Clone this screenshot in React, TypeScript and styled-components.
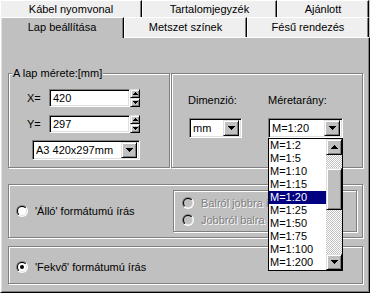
import React, { useId } from 'react';
import styled, { createGlobalStyle, css } from 'styled-components';

const GlobalStyle = createGlobalStyle`
  html, body { margin: 0; padding: 0; background: #c0c0c0; }
  body { font-family: "Liberation Sans", Arial, sans-serif; font-size: 11px; color: #000; }
  * { box-sizing: border-box; }
`;

const raised = css`
  border: 1px solid;
  border-color: #dfdfdf #000 #000 #dfdfdf;
  box-shadow: inset 1px 1px #fff, inset -1px -1px #808080;
  background: #c0c0c0;
`;

const sunken = css`
  border: 1px solid;
  border-color: #808080 #fff #fff #808080;
  box-shadow: inset 1px 1px #000, inset -1px -1px #dfdfdf;
  background: #fff;
`;

const Window = styled.div`
  width: 370px;
  height: 293px;
  display: flex;
  flex-direction: column;
  background: #c0c0c0;
  overflow: hidden;
`;

const TabRow = styled.div<{ $h: number }>`
  display: flex;
  align-items: flex-end;
  height: ${p => p.$h}px;
  flex: none;
  position: relative;
  z-index: 2;
`;

const Tab = styled.div<{ $w: number; $active?: boolean; $pb?: number }>`
  width: ${p => p.$w}px;
  height: 100%;
  flex: none;
  display: flex;
  align-items: center;
  justify-content: center;
  padding-bottom: ${p => p.$pb ?? 0}px;
  white-space: nowrap;
  background: #efefef;
  border-top: 1px solid #fff;
  border-left: 1px solid #fff;
  border-right: 1px solid #000;
  box-shadow: inset -1px 0 #808080;
  ${p =>
    p.$active &&
    css`
      background: #c0c0c0;
      height: calc(100% + 1px);
      margin-bottom: -1px;
      box-shadow: inset -1px 0 #808080, inset 1px 0 #dfdfdf;
    `}
`;

const Panel = styled.div`
  flex: 1;
  display: flex;
  flex-direction: column;
  padding: 35px 6px 0 7px;
  border-top: 1px solid #fff;
  border-left: 1px solid #fff;
  border-right: 1px solid #000;
  border-bottom: 1px solid #000;
  box-shadow: inset 1px 0 #dfdfdf, inset -1px -1px #808080;
`;

const TopSection = styled.div`
  display: flex;
  gap: 1px;
  flex: none;
`;

const Group = styled.div<{ $w?: number; $h: number; $mt?: number }>`
  position: relative;
  flex: none;
  width: ${p => (p.$w ? `${p.$w}px` : 'auto')};
  height: ${p => p.$h}px;
  margin-top: ${p => p.$mt ?? 0}px;
  border: 1px solid #808080;
  box-shadow: inset 1px 1px #fff, 1px 1px #fff;
`;

const Legend = styled.span`
  position: absolute;
  top: -7px;
  left: 3px;
  padding: 0 1px;
  line-height: 13px;
  background: #c0c0c0;
  white-space: nowrap;
`;

const SizeGroup = styled(Group)`
  display: flex;
  flex-direction: column;
  padding: 15px 0 0 18px;
`;

const FieldRow = styled.div<{ $mt?: number }>`
  display: flex;
  align-items: center;
  height: 18px;
  margin-top: ${p => p.$mt ?? 0}px;
`;

const FieldLabel = styled.span`
  width: 22px;
  flex: none;
`;

const TextInput = styled.div<{ $w: number }>`
  ${sunken};
  width: ${p => p.$w}px;
  height: 18px;
  padding: 0 0 0 3px;
  display: flex;
  align-items: center;
`;

const Spin = styled.div`
  display: flex;
  flex-direction: column;
  width: 10px;
  height: 18px;
`;

const SpinButton = styled.div`
  ${raised};
  height: 9px;
  display: flex;
  align-items: center;
  justify-content: center;
`;

const Combo = styled.div<{ $w: number; $ml?: number; $mt?: number }>`
  ${sunken};
  width: ${p => p.$w}px;
  height: 20px;
  margin-left: ${p => p.$ml ?? 0}px;
  margin-top: ${p => p.$mt ?? 0}px;
  padding: 2px 2px 2px 3px;
  display: flex;
  align-items: center;
  justify-content: space-between;
  flex: none;
`;

const ComboButton = styled.div`
  ${raised};
  width: 16px;
  height: 16px;
  display: flex;
  align-items: center;
  justify-content: center;
  flex: none;
`;

const ScaleGroup = styled(Group)`
  display: grid;
  grid-template-columns: 80px 75px;
  grid-template-rows: 13px 20px;
  row-gap: 11px;
  padding: 20px 0 0 16px;
  align-content: start;
`;

const Caption = styled.span`
  line-height: 13px;
  white-space: nowrap;
`;

const ComboWrap = styled.div`
  position: relative;
`;

const DropList = styled.div`
  position: absolute;
  z-index: 10;
  top: 20px;
  left: 0;
  width: 75px;
  height: 133px;
  border: 1px solid #000;
  background: #fff;
  display: flex;
`;

const Items = styled.div`
  flex: 1;
  display: flex;
  flex-direction: column;
`;

const Item = styled.div<{ $sel?: boolean }>`
  height: 13px;
  line-height: 13px;
  padding-left: 1px;
  white-space: nowrap;
  background: ${p => (p.$sel ? '#000080' : 'transparent')};
  color: ${p => (p.$sel ? '#fff' : '#000')};
`;

const ScrollBar = styled.div`
  width: 16px;
  flex: none;
  display: flex;
  flex-direction: column;
`;

const ScrollButton = styled.div`
  ${raised};
  width: 16px;
  height: 16px;
  flex: none;
  display: flex;
  align-items: center;
  justify-content: center;
`;

const Track = styled.div<{ $h?: number }>`
  flex: ${p => (p.$h ? 'none' : '1')};
  height: ${p => (p.$h ? `${p.$h}px` : 'auto')};
  background: repeating-conic-gradient(#fff 0 25%, #c0c0c0 0 50%) 0 0 / 2px 2px;
`;

const Thumb = styled.div`
  ${raised};
  height: 42px;
  flex: none;
`;

const OrientGroup = styled(Group)<{ $pt?: number }>`
  display: flex;
  align-items: center;
  padding: ${p => p.$pt ?? 0}px 5px 0 7px;
`;

const RadioRow = styled.div<{ $h?: number }>`
  display: flex;
  align-items: center;
  gap: 7px;
  height: ${p => (p.$h ? `${p.$h}px` : 'auto')};
  white-space: nowrap;
`;

const RadioLabel = styled.span<{ $disabled?: boolean }>`
  color: ${p => (p.$disabled ? '#808080' : '#000')};
  text-shadow: ${p => (p.$disabled ? '1px 1px 0 #fff' : 'none')};
`;

/* the open drop-down list covers the right part of these labels */
const CoveredLabel = styled(RadioLabel)`
  display: block;
  max-width: 69px;
  overflow: hidden;
  white-space: nowrap;
  line-height: 14px;
`;

const InnerFrame = styled.div`
  width: 184px;
  height: 42px;
  margin-left: auto;
  margin-bottom: 1px;
  padding: 4px 0 0 8px;
  border: 1px solid #808080;
  box-shadow: inset 1px 1px #fff, 1px 1px #fff;
  overflow: hidden;
  display: flex;
  flex-direction: column;
`;

const RadioSvg = styled.svg`
  flex: none;
  display: block;
`;

const Arrow = ({ dir, w = 7 }: { dir: 'up' | 'down'; w?: number }) => {
  const h = Math.ceil(w / 2);
  const rects = [];
  for (let i = 0; i < h; i++) {
    const y = dir === 'down' ? i : h - 1 - i;
    rects.push(<rect key={i} x={i} y={y} width={w - 2 * i} height={1} />);
  }
  return (
    <svg width={w} height={h} viewBox={`0 0 ${w} ${h}`} shapeRendering="crispEdges" fill="#000" style={{ display: 'block' }}>
      {rects}
    </svg>
  );
};

const Radio = ({ checked, disabled }: { checked?: boolean; disabled?: boolean }) => {
  const id = useId().replace(/[^a-zA-Z0-9]/g, '');
  return (
    <RadioSvg width="12" height="12" viewBox="0 0 12 12">
      <defs>
        <linearGradient id={`o${id}`} x1="0" y1="0" x2="1" y2="1">
          <stop offset="0.5" stopColor="#808080" />
          <stop offset="0.5" stopColor="#ffffff" />
        </linearGradient>
        <linearGradient id={`i${id}`} x1="0" y1="0" x2="1" y2="1">
          <stop offset="0.5" stopColor="#000000" />
          <stop offset="0.5" stopColor="#dfdfdf" />
        </linearGradient>
      </defs>
      <circle cx="6" cy="6" r="6" fill={`url(#o${id})`} />
      <circle cx="6" cy="6" r="5" fill={`url(#i${id})`} />
      <circle cx="6" cy="6" r="4" fill={disabled ? '#c0c0c0' : '#ffffff'} />
      {checked && <circle cx="6" cy="6" r="2" fill="#000" />}
    </RadioSvg>
  );
};

const ComboBox = ({ value, w, ml, mt }: { value: string; w: number; ml?: number; mt?: number }) => (
  <Combo $w={w} $ml={ml} $mt={mt}>
    <span>{value}</span>
    <ComboButton>
      <Arrow dir="down" />
    </ComboButton>
  </Combo>
);

const SpinField = ({ label, value, mt }: { label: string; value: string; mt?: number }) => (
  <FieldRow $mt={mt}>
    <FieldLabel>{label}</FieldLabel>
    <TextInput $w={81}>{value}</TextInput>
    <Spin>
      <SpinButton>
        <Arrow dir="up" w={5} />
      </SpinButton>
      <SpinButton>
        <Arrow dir="down" w={5} />
      </SpinButton>
    </Spin>
  </FieldRow>
);

const scales = ['M=1:2', 'M=1:5', 'M=1:10', 'M=1:15', 'M=1:20', 'M=1:25', 'M=1:50', 'M=1:75', 'M=1:100', 'M=1:200'];

export default function App() {
  return (
    <>
      <GlobalStyle />
      <Window>
        <TabRow $h={17}>
          <Tab $w={142}>Kábel nyomvonal</Tab>
          <Tab $w={135}>Tartalomjegyzék</Tab>
          <Tab $w={92}>Ajánlott</Tab>
        </TabRow>
        <TabRow $h={20}>
          <Tab $w={124} $active $pb={2}>Lap beállítása</Tab>
          <Tab $w={123} $pb={2}>Metszet színek</Tab>
          <Tab $w={122} $pb={2}>Fésű rendezés</Tab>
        </TabRow>
        <Panel>
          <TopSection>
            <SizeGroup $w={162} $h={95}>
              <Legend>A lap mérete:[mm]</Legend>
              <SpinField label="X=" value="420" />
              <SpinField label="Y=" value="297" mt={8} />
              <ComboBox value="A3 420x297mm" w={108} ml={5} mt={7} />
            </SizeGroup>
            <ScaleGroup $w={192} $h={95}>
              <Caption>Dimenzió:</Caption>
              <Caption>Méretarány:</Caption>
              <ComboBox value="mm" w={53} ml={1} />
              <ComboWrap>
                <ComboBox value="M=1:20" w={75} />
                <DropList>
                  <Items>
                    {scales.map(s => (
                      <Item key={s} $sel={s === 'M=1:20'}>
                        {s}
                      </Item>
                    ))}
                  </Items>
                  <ScrollBar>
                    <ScrollButton>
                      <Arrow dir="up" />
                    </ScrollButton>
                    <Track $h={13} />
                    <Thumb />
                    <Track />
                    <ScrollButton>
                      <Arrow dir="down" />
                    </ScrollButton>
                  </ScrollBar>
                </DropList>
              </ComboWrap>
            </ScaleGroup>
          </TopSection>
          <OrientGroup $h={54} $mt={16}>
            <RadioRow>
              <Radio />
              <span>'Álló' formátumú írás</span>
            </RadioRow>
            <InnerFrame>
              <RadioRow $h={17}>
                <Radio disabled />
                <CoveredLabel $disabled>Balról jobbra írás</CoveredLabel>
              </RadioRow>
              <RadioRow $h={17}>
                <Radio disabled />
                <CoveredLabel $disabled>Jobbról balra írás</CoveredLabel>
              </RadioRow>
            </InnerFrame>
          </OrientGroup>
          <OrientGroup $h={38} $mt={8} $pt={3}>
            <RadioRow>
              <Radio checked />
              <span>'Fekvő' formátumú írás</span>
            </RadioRow>
          </OrientGroup>
        </Panel>
      </Window>
    </>
  );
}
